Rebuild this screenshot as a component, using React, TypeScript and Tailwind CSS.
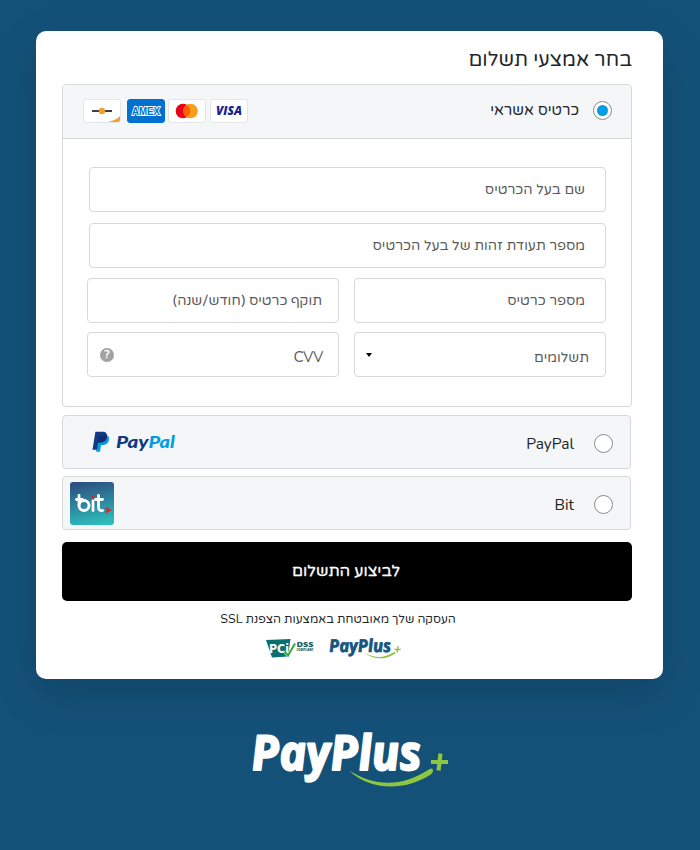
import type { ReactNode } from "react";

const sans = "font-['Varela_Round','Open_Sans','DejaVu_Sans',sans-serif]";
const latin = "font-['Nunito','Varela_Round','Open_Sans',sans-serif]";

function Radio({ checked }: { checked?: boolean }) {
  return (
    <span className="flex h-[19px] w-[19px] shrink-0 items-center justify-center rounded-full border border-[#8b8b8b] bg-white">
      {checked && <span className="h-[11px] w-[11px] rounded-full bg-[#009de6]" />}
    </span>
  );
}

function Field({ className, children }: { className: string; children: ReactNode }) {
  return (
    <div className={`flex h-[45px] items-center rounded border border-[#d6d8da] bg-white text-[14px] whitespace-nowrap text-[#5b5b5b] ${className}`}>
      {children}
    </div>
  );
}

function CardBadge({ className, children }: { className: string; children: ReactNode }) {
  return <span className={`h-6 w-[38px] shrink-0 overflow-hidden rounded-[3px] border ${className}`}>{children}</span>;
}

function CardLogos() {
  return (
    <div dir="ltr" className="flex items-center">
      <CardBadge className="border-[#e3e5e8] bg-white">
        <svg viewBox="0 0 36 22" className="block h-[22px] w-9">
          <path d="M8 11h20" stroke="#3c4149" strokeWidth="1.800" />
          <circle cx="18" cy="11" r="3.200" fill="#efa030" />
          <path d="M24 22Q32 20.500 36 16V22z" fill="#efa030" />
        </svg>
      </CardBadge>
      <CardBadge className="ml-1.5 border-[#0071cf] bg-[#0071cf]">
        <svg viewBox="0 0 36 22" className="block h-[22px] w-9">
          <text x="4" y="14.500" textLength="28" lengthAdjust="spacingAndGlyphs" fontFamily="Liberation Sans" fontWeight="700" fontSize="10" fill="#0071cf" stroke="#fff" strokeWidth="1.800" paintOrder="stroke">AMEX</text>
        </svg>
      </CardBadge>
      <CardBadge className="ml-[3px] border-[#e3e5e8] bg-white">
        <svg viewBox="0 0 36 22" className="block h-[22px] w-9">
          <circle cx="14" cy="11" r="7.300" fill="#eb001b" />
          <circle cx="21.500" cy="11" r="7.300" fill="#f79e1b" />
          <path d="M17.750 4.740a7.300 7.300 0 0 1 0 12.520a7.300 7.300 0 0 1 0-12.520z" fill="#ff5f00" />
        </svg>
      </CardBadge>
      <CardBadge className="ml-1 border-[#e3e5e8] bg-white">
        <svg viewBox="0 0 36 22" className="block h-[22px] w-9">
          <text x="5" y="15" textLength="26" lengthAdjust="spacingAndGlyphs" fontFamily="Open Sans" fontStyle="italic" fontWeight="800" fontSize="11.500" fill="#1a1f8f">VISA</text>
        </svg>
      </CardBadge>
    </div>
  );
}

function PayPalLogo() {
  return (
    <svg viewBox="0 0 84 22" className="block h-[22px] w-[84px] overflow-visible">
      <path d="M7.500 4h7c2.600 1 3 3.200 2.300 5.400c-.9 3.400-3.400 4.500-6.400 4.500H9l-1 6.800H4z" fill="#009ee3" />
      <path d="M3.400.8h7.200c3.300 0 5 1.900 4.300 5.300c-.8 3.900-3.200 5.400-6.700 5.400H6.200L5 18.800H.5z" fill="#113984" />
      <path d="M7 5.100h7.800q.3.600.1 1.500c-.8 3.500-3.200 4.900-6.700 4.900H6.200z" fill="#172c70" />
      <text x="24" y="17" textLength="32.500" lengthAdjust="spacingAndGlyphs" fontFamily="Lato" fontStyle="italic" fontWeight="900" fontSize="17.500" fill="#113984">Pay</text>
      <text x="56.500" y="17" textLength="26.500" lengthAdjust="spacingAndGlyphs" fontFamily="Lato" fontStyle="italic" fontWeight="900" fontSize="17.500" fill="#009ee3">Pal</text>
    </svg>
  );
}

function BitLogo() {
  return (
    <svg viewBox="0 0 44 43" className="block h-[43px] w-11">
      <defs>
        <linearGradient id="bit" x1="0.400" y1="0" x2="0.600" y2="1">
          <stop offset="0" stopColor="#2c5282" />
          <stop offset="1" stopColor="#2dbdbb" />
        </linearGradient>
      </defs>
      <rect width="44" height="43" rx="3" fill="url(#bit)" />
      <g fill="none" stroke="#fff" strokeWidth="2.800" strokeLinecap="round" strokeLinejoin="round">
        <path d="M6.500 17.500h6M9 13.500v10" />
        <circle cx="14" cy="23.500" r="5" />
        <path d="M23 19v9.500M28.500 13.500v11.500q0 4 4 3.500M25.500 17.500h7" />
      </g>
      <circle cx="23" cy="15" r="1.500" fill="#e3202f" />
      <path d="M35.500 26l4.200 2.200l-4.200 2.200" fill="none" stroke="#e3202f" strokeWidth="2" />
    </svg>
  );
}

function PayPlusLogo({ className, color }: { className: string; color: string }) {
  return (
    <svg viewBox="0 0 198 57" className={`block overflow-visible ${className}`}>
      <g transform="translate(1.500 38.500) skewX(5)">
        <text x="0" y="0" textLength="170" lengthAdjust="spacingAndGlyphs" fontFamily="Open Sans" fontStyle="italic" fontWeight="700" fontSize="48.500" fill={color} stroke={color} strokeWidth="2" strokeLinejoin="round">PayPlus</text>
      </g>
      <path d="M98 39.500C124 56 151 56 178 38.500Q182 36 182 40Q182 42 179 44C152 61 118 59 98 39.500z" fill="#8dc63f" />
      <path d="M180 31h17M189.500 22.500l-2 17" stroke="#8dc63f" strokeWidth="4.200" />
    </svg>
  );
}

function PciLogo() {
  return (
    <svg viewBox="0 0 49 20" className="block h-5 w-[49px] overflow-visible">
      <path d="M1 2L25.500 1L23 18.500L7 19.500z" fill="#087073" />
      <text x="4" y="15" textLength="20" lengthAdjust="spacingAndGlyphs" fontFamily="DejaVu Sans" fontWeight="700" fontSize="11.500" fill="#fff">PCi</text>
      <path d="M19.500 13.500l3.500 4L30 5.500" fill="none" stroke="#fff" strokeWidth="3" />
      <path d="M19.500 13.500l3.500 4L30 5.500" fill="none" stroke="#2faa49" strokeWidth="2" />
      <text x="31.500" y="9" textLength="17" lengthAdjust="spacingAndGlyphs" fontFamily="Open Sans" fontWeight="800" fontSize="7.500" fill="#176063">DSS</text>
      <text x="31.500" y="13" textLength="17" lengthAdjust="spacingAndGlyphs" fontFamily="Open Sans" fontWeight="800" fontSize="3" fill="#176063">COMPLIANT</text>
    </svg>
  );
}

export default function App() {
  return (
    <div dir="rtl" className={`h-[850px] w-[700px] overflow-hidden bg-[#145179] pt-[31px] ${sans}`}>
      <main className="mr-[37px] h-[648px] w-[627px] rounded-[10px] bg-white pr-[31px] pl-[26px] shadow-[0_15px_45px_rgba(0,0,0,0.15)]">
        <h1 className="h-[53px] pt-3.5 text-[20px] leading-[30px] text-[#212529]">בחר אמצעי תשלום</h1>

        <section className="h-[323px] rounded border border-[#d6d8da]">
          <div className="flex h-[54px] items-center rounded-t-[3px] border-b border-[#d6d8da] bg-[#f5f6f8] pr-[19px] pb-[2px] pl-5">
            <Radio checked />
            <span className="mr-3.5 text-[15px] text-[#212529]">כרטיס אשראי</span>
            <span className="mr-auto"><CardLogos /></span>
          </div>
          <div className="pt-7 pr-[25px] pl-6">
            <Field className="w-[517px] pr-5">שם בעל הכרטיס</Field>
            <Field className="mt-[11px] w-[517px] pr-5">מספר תעודת זהות של בעל הכרטיס</Field>
            <div className="mt-2.5 grid grid-cols-[252px_252px] gap-x-[15px] gap-y-[9px]">
              <Field className="pr-5">מספר כרטיס</Field>
              <Field className="pr-4">תוקף כרטיס (חודש/שנה)</Field>
              <Field className="pr-4 pl-[11px]">
                <span className="pt-1.5">תשלומים</span>
                <span className="mr-auto h-0 w-0 border-x-[3px] border-t-4 border-x-transparent border-t-black" />
              </Field>
              <Field className="pr-[15px] pl-3">
                <span className={`pt-1.5 text-[15px] tracking-[-0.300px] ${latin}`}>CVV</span>
                <span className="mr-auto flex h-3.5 w-3.5 items-center justify-center rounded-full bg-[#a2a2a2] text-[11px] leading-none font-bold text-white">?</span>
              </Field>
            </div>
          </div>
        </section>

        <section className="mt-2 mr-px flex h-[54px] items-center rounded border border-[#d6d8da] bg-[#f5f6f8] pr-[17px] pl-[29px]">
          <span className="pt-0.5"><Radio /></span>
          <span className={`mr-5 pt-1 text-[15.500px] text-[#212529] ${latin}`}>PayPal</span>
          <span dir="ltr" className="mr-auto"><PayPalLogo /></span>
        </section>
        <section className="mt-[7px] mr-px flex h-[54px] items-center rounded border border-[#d6d8da] bg-[#f5f6f8] pr-[17px] pl-[7px]">
          <span className="pt-0.5"><Radio /></span>
          <span className={`mr-5 pt-1 text-[15.500px] text-[#212529] ${latin}`}>Bit</span>
          <span dir="ltr" className="mr-auto"><BitLogo /></span>
        </section>

        <button className="mt-3 flex h-[59px] w-full items-center justify-center rounded-[5px] bg-black pr-0.5 pb-0.5 text-[16px] font-medium text-white">
          <span className="[-webkit-text-stroke:0.300px_white]">לביצוע התשלום</span>
        </button>
        <p className="mt-2 pr-[18px] text-center text-[12px] leading-5 text-[#212529]">העסקה שלך מאובטחת באמצעות הצפנת <span className={`text-[12.500px] ${latin}`}>SSL</span></p>
        <div dir="ltr" className="mt-[9px] flex items-start pl-[203px]">
          <PciLogo />
          <PayPlusLogo className="ml-[15px] h-[21px] w-[72px]" color="#175580" />
        </div>
      </main>
      <div dir="ltr" className="mt-[52px] flex pl-[251px]">
        <PayPlusLogo className="h-[57px] w-[198px]" color="#fff" />
      </div>
    </div>
  );
}
